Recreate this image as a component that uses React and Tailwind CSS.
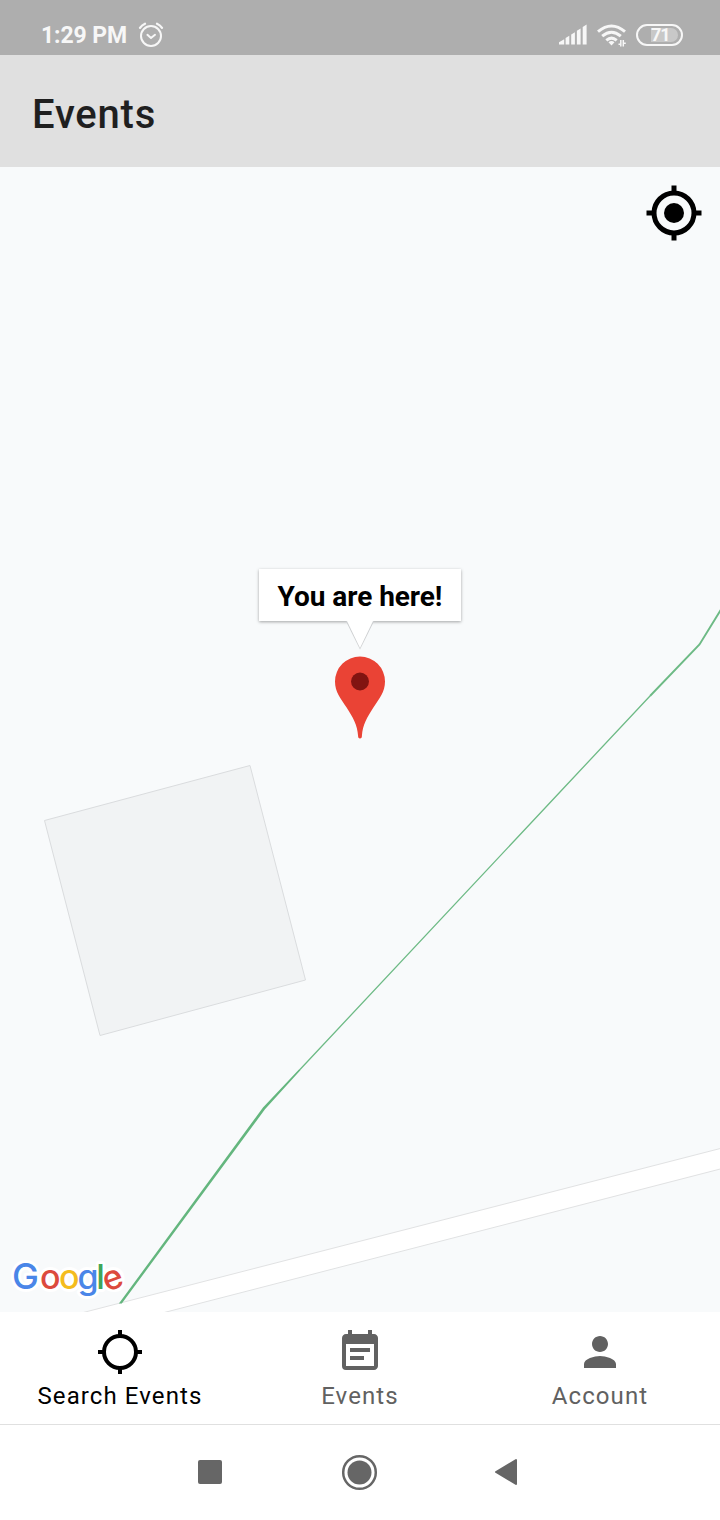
import React from "react";

function AlarmIcon() {
  return (
    <svg className="h-[26px] w-[26px]" viewBox="0 0 26 26" fill="none" stroke="#f7f7f7" strokeWidth="2" strokeLinecap="round" strokeLinejoin="round">
      <circle cx="13" cy="14" r="10" />
      <path d="M9.4 12.8 13 16l4-3.2" />
      <path d="M2 5.800Q3.800 3.200 7 1.700M24 5.800Q22.200 3.200 19 1.700" strokeWidth="2.300" />
    </svg>
  );
}

function SignalIcon() {
  return (
    <svg className="h-[21px] w-[28px]" viewBox="0 0 28 21" fill="#f7f7f7">
      <path d="M0 20.500V18.300L5.200 15.200V20.500ZM6.600 20.500V14L10.300 11.800V20.500ZM12.200 20.500V10.500L15.900 8.200V20.500ZM17.900 20.500V6.800L21.600 4.400V20.500ZM23.700 20.500V3L27.600 0.500V20.500Z" />
    </svg>
  );
}

function WifiIcon() {
  return (
    <svg className="h-[23px] w-[29px]" viewBox="0 0 29 23" fill="none" stroke="#f7f7f7">
      <path strokeWidth="3" d="M1 7.700Q14.500-3.700 28 7.700M5.200 12.200Q14.500 4.300 23.800 12.200M9.300 16.300Q14.500 12 19.700 16.300" />
      <path fill="#f7f7f7" stroke="none" d="M11.500 18.200Q14.500 15.800 17.500 18.200L14.500 21.600Z" />
      <path strokeWidth="1.500" d="M23.800 16v6.500M26.300 16v6.500" />
      <path strokeWidth="1.500" d="M21.500 20.300h2M26.300 19.300h2.500" />
    </svg>
  );
}

function StatusBar() {
  return (
    <div className="flex h-[55px] w-full shrink-0 items-start bg-[#aeaeae] pl-[41px] pr-[37px] text-[#f7f7f7]">
      <span className="mt-[20px] w-[86px] text-[23px] font-bold leading-[32px] tracking-[-0.1px] whitespace-nowrap">1:29 PM</span>
      <span className="ml-[11px] mt-[22px]"><AlarmIcon /></span>
      <span className="ml-auto mt-[24px]"><SignalIcon /></span>
      <span className="ml-[10px] mt-[24px]"><WifiIcon /></span>
      <div className="ml-[10px] mt-[24px] flex h-[22px] w-[47px] items-center justify-end rounded-full border-2 border-[#f7f7f7] pr-[3px]">
        <div className="flex h-[14px] w-[27px] items-center rounded-r-full bg-[#c8c8c8] text-[18px] font-bold leading-none tracking-[-1.2px]">71</div>
      </div>
    </div>
  );
}

function MapPanel() {
  return (
    <main className="relative h-[1145px] w-full shrink-0 overflow-hidden bg-[#f8fafb]">
      <svg className="absolute inset-0 h-full w-full" viewBox="0 167 720 1145">
        <path d="M44.500 820.500 250 765.500 305.500 980 100 1035.500Z" fill="#f1f3f4" stroke="#dadcde" strokeWidth="1" />
        <path d="M60 1318.500 730 1146V1166.500L141 1318.500Z" fill="#fff" stroke="#e1e2e3" strokeWidth="1" />
        <path d="M650 696 560 792 300 1069.500" fill="none" stroke="#6dba85" strokeWidth="1.300" />
        <path d="M721 609.500 699.500 644.500 650 696" fill="none" stroke="#6dba85" strokeWidth="1.900" />
        <path d="M299.400 1069 263 1107.500 118.900 1303.500H121.800L265 1109.300 300.600 1070Z" fill="#64b67e" />
        <path d="M360 738.500c-1.500 0-1.900-1-1.900-2.500-.7-11-5-18.500-11.500-28.500-6-9-11.600-15.500-11.600-26a25 25 0 0 1 50 0c0 10.500-5.600 17-11.600 26-6.500 10-10.800 17.500-11.500 28.500 0 1.500-.4 2.500-1.900 2.500Z" fill="#ea4335" />
        <circle cx="360" cy="681.500" r="9" fill="#811411" />
        <g fontFamily="Inter, sans-serif" fontSize="34" fontWeight="500">
          <text y="1289" stroke="#fff" strokeWidth="6" strokeLinejoin="round" fill="#fff"><tspan x="12" fontSize="36">G</tspan><tspan x="40">o</tspan><tspan x="59">o</tspan><tspan x="77.500">g</tspan><tspan x="96.200">l</tspan><tspan x="103">e</tspan></text>
          <text y="1289"><tspan x="12" fontSize="36" fill="#4a86e8">G</tspan><tspan x="40" fill="#dc4a3d">o</tspan><tspan x="59" fill="#f4bc1c">o</tspan><tspan x="77.500" fill="#4a86e8">g</tspan><tspan x="96.200" fill="#3fa65a">l</tspan></text>
          <text y="1289" x="103" fill="#dc4a3d" transform="rotate(-20 113 1280)">e</text>
        </g>
      </svg>
      <div className="absolute left-[259px] top-[402px] flex h-[52px] w-[202px] items-center justify-center bg-white pt-[4px] text-[28px] font-bold leading-8 tracking-[-0.05px] text-black shadow-[0_1px_3px_rgba(0,0,0,0.35)]">
        <span className="whitespace-nowrap">You are here!</span>
      </div>
      <svg className="absolute left-[344px] top-[454px] h-[32px] w-[32px]" viewBox="0 0 32 32">
        <path d="M1.800 0 16 28.500 30.200 0" fill="#cdcfd1" />
        <path d="M2.500-1 16 27 29.500-1Z" fill="#fff" />
      </svg>
      <button aria-label="My location" className="absolute right-[18px] top-[18px] h-[56px] w-[56px]">
        <svg className="h-full w-full" viewBox="0 0 56 56" fill="none" stroke="#000" strokeWidth="5">
          <circle cx="28" cy="28" r="20" />
          <circle cx="28" cy="28" r="10" fill="#000" stroke="none" />
          <path d="M28 .5v8M28 47.500v8M.5 28h8M47.500 28h8" />
        </svg>
      </button>
    </main>
  );
}

function Tab({ label, active, children }) {
  return (
    <button className={active ? "flex flex-1 flex-col items-center pt-[16px] text-black" : "flex flex-1 flex-col items-center pt-[16px] text-[#616161]"}>
      <svg className="h-[48px] w-[48px]" viewBox="0 0 24 24" fill="currentColor">{children}</svg>
      <span className="mt-[4px] text-[24px] leading-[32px] tracking-[1.1px] whitespace-nowrap">{label}</span>
    </button>
  );
}

export default function App() {
  return (
    <div className="flex h-[1520px] w-[720px] flex-col overflow-hidden bg-white font-[Roboto,sans-serif]">
      <StatusBar />
      <header className="flex h-[112px] w-full shrink-0 items-center bg-[#e0e0e0] pl-[32px] pt-[8px]">
        <h1 className="text-[40px] font-medium leading-[48px] tracking-[0.8px] text-[#1f1f1f]">Events</h1>
      </header>
      <MapPanel />
      <nav className="flex h-[112px] shrink-0 bg-white">
        <Tab label="Search Events" active>
          <path d="M12 4a8 8 0 1 0 0 16 8 8 0 0 0 0-16" fill="none" stroke="currentColor" strokeWidth="2" />
          <path d="M11 1h2v3h-2zM11 20h2v3h-2zM1 11h3v2H1zM20 11h3v2h-3z" />
        </Tab>
        <Tab label="Events">
          <path d="M17 10H7v2h10v-2zm2-7h-1V1h-2v2H8V1H6v2H5c-1.110 0-1.990.9-1.990 2L3 19a2 2 0 0 0 2 2h14c1.100 0 2-.9 2-2V5c0-1.100-.9-2-2-2zm0 16H5V8h14v11zm-5-5H7v2h7v-2z" />
        </Tab>
        <Tab label="Account">
          <path d="M12 12c2.210 0 4-1.790 4-4s-1.790-4-4-4-4 1.790-4 4 1.790 4 4 4zm0 2c-2.670 0-8 1.340-8 4v2h16v-2c0-2.660-5.330-4-8-4z" />
        </Tab>
      </nav>
      <footer className="flex h-[96px] shrink-0 items-center border-t border-[#e0e0e0] bg-white pb-[1px] pl-[198px] text-[#666]">
        <div className="h-[24px] w-[24px] rounded-[2px] bg-[#666]" />
        <svg className="ml-[119px] h-[37px] w-[37px]" viewBox="0 0 37 37">
          <circle cx="18.500" cy="18.500" r="16.300" fill="none" stroke="currentColor" strokeWidth="2.500" />
          <circle cx="18.500" cy="18.500" r="12" fill="currentColor" />
        </svg>
        <svg className="ml-[116px] h-[28px] w-[24px]" viewBox="0 0 24 28">
          <path d="M22 2v24L2 14Z" fill="currentColor" stroke="currentColor" strokeWidth="2" strokeLinejoin="round" />
        </svg>
      </footer>
    </div>
  );
}
